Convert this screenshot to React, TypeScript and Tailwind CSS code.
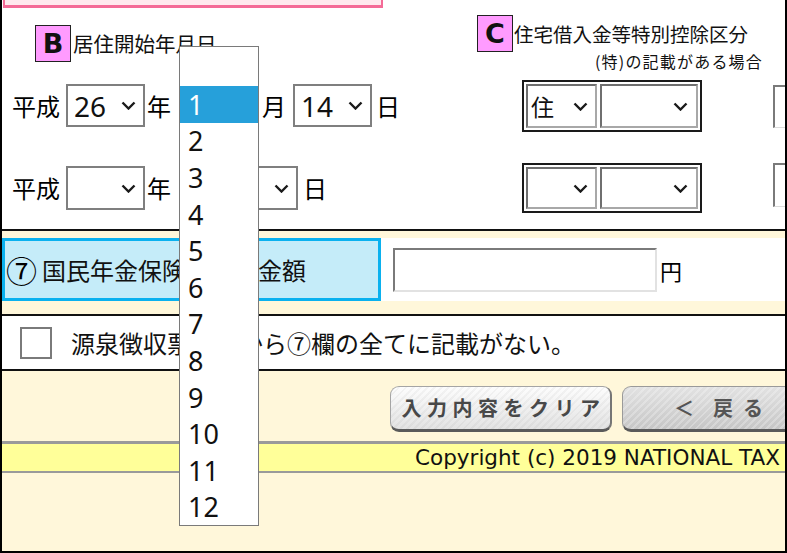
import React from "react";

const JP = "font-['Noto_Sans_CJK_JP',sans-serif]";
const LAT = "font-['DejaVu_Sans','Noto_Sans_CJK_JP',sans-serif]";
const NUM = "font-['Noto_Sans','Open_Sans',sans-serif]";

function Chev() {
  return (
    <svg width="15" height="9" viewBox="0 0 15 9" className="shrink-0">
      <path d="M1.5 1.5 L7.5 7.5 L13.5 1.5" fill="none" stroke="#1a1a1a" strokeWidth="2.4" />
    </svg>
  );
}

function Sel({ w, h, value, cls = "" }: { w: string; h: string; value?: string; cls?: string }) {
  return (
    <div className={`${w} ${h} ${cls} flex items-center justify-between bg-white border-2 border-[#7f7f7f] pl-[6px] pr-[7px] shrink-0`}>
      <span className={`${NUM} text-[28px] leading-none text-[#111]`}>{value ?? ""}</span>
      <Chev />
    </div>
  );
}

function GroupSel({ first, h }: { first?: string; h: string }) {
  return (
    <div className={`w-[180px] ${h} border-2 border-[#1a1a1a] p-[2px] flex gap-[3px] bg-white shrink-0`}>
      <div className="w-[71px] h-full flex items-center justify-between border-2 border-t-[#6f6f6f] border-l-[#6f6f6f] border-r-[#a8a8a8] border-b-[#a8a8a8] pl-[3px] pr-[7px]">
        <span className={`${JP} text-[23px] leading-none text-[#111]`}>{first ?? ""}</span>
        <Chev />
      </div>
      <div className="flex-1 h-full flex items-center justify-end border-2 border-t-[#6f6f6f] border-l-[#6f6f6f] border-r-[#a8a8a8] border-b-[#a8a8a8] pr-[8px]">
        <Chev />
      </div>
    </div>
  );
}

function Label({ letter }: { letter: string }) {
  return (
    <div className="w-[36px] h-[37px] shrink-0 bg-[#ff9bff] border-[1.5px] border-[#222] flex items-center justify-center">
      <span className={`${LAT} font-bold text-[27px] leading-none text-[#111]`}>{letter}</span>
    </div>
  );
}

export default function App() {
  const months = ["1", "2", "3", "4", "5", "6", "7", "8", "9", "10", "11", "12"];
  return (
    <div className={`relative w-[787px] h-[553px] overflow-hidden bg-[#fff7da] border-l-2 border-r-2 border-b-2 border-black text-black ${JP}`}>
      {/* upper white section */}
      <div className="h-[231px] bg-white border-b-2 border-[#111]">
        <div className="ml-[1px] w-[380px] h-[8px] border-x-2 border-b-[3px] border-[#f46b97] bg-[#ffe9ee]" />
        <div className="flex">
          {/* left column */}
          <div className="w-[475px] shrink-0">
            <div className="mt-[17px] ml-[33px] flex items-center h-[37px]">
              <Label letter="B" />
              <span className="ml-[2px] text-[20.5px] leading-none text-[#111]">居住開始年月日</span>
            </div>
            <div className="mt-[22px] ml-[10px] h-[43px] flex items-center text-[24px] leading-none">
              <span>平成</span>
              <Sel w="w-[79px]" h="h-[43px]" value="26" cls="ml-[6px]" />
              <span className="ml-[2px]">年</span>
              <Sel w="w-[79px]" h="h-[43px]" value="1" cls="ml-[8px]" />
              <span className="ml-[4px]">月</span>
              <Sel w="w-[79px]" h="h-[43px]" value="14" cls="ml-[7px]" />
              <span className="ml-[4px]">日</span>
            </div>
            <div className="mt-[39px] ml-[10px] h-[44px] flex items-center text-[24px] leading-none">
              <span>平成</span>
              <Sel w="w-[79px]" h="h-[44px]" cls="ml-[6px]" />
              <span className="ml-[2px]">年</span>
              <Sel w="w-[119px]" h="h-[44px]" cls="ml-[8px]" />
              <span className="ml-[5px]">日</span>
            </div>
          </div>
          {/* right column */}
          <div className="w-[308px] shrink-0 min-w-0">
            <div className="mt-[7px] flex items-center h-[37px]">
              <Label letter="C" />
              <span className="ml-[1px] text-[19.5px] leading-none text-[#111] whitespace-nowrap">住宅借入金等特別控除区分</span>
            </div>
            <div className="h-[18px] flex items-center justify-end pr-[22px]">
              <span className="text-[16px] leading-none tracking-[1.2px] text-[#111] whitespace-nowrap">(特)の記載がある場合</span>
            </div>
            <div className="mt-[10px] flex items-start">
              <div className="ml-[45px]">
                <GroupSel first="住" h="h-[52px]" />
              </div>
              <div className="ml-[71px] mt-[5px] w-[40px] h-[43px] shrink-0 bg-white border-t-2 border-l-2 border-[#7a7a7a] border-r border-b border-r-[#dcdcdc] border-b-[#dcdcdc]" />
            </div>
            <div className="mt-[31px] flex items-start">
              <div className="ml-[45px]">
                <GroupSel h="h-[50px]" />
              </div>
              <div className="ml-[71px] w-[40px] h-[44px] shrink-0 bg-white border-t-2 border-l-2 border-[#7a7a7a] border-r border-b border-r-[#dcdcdc] border-b-[#dcdcdc]" />
            </div>
          </div>
        </div>
      </div>

      {/* row 7 */}
      <div className="mt-[7px] h-[63px] flex bg-white">
        <div className="w-[379px] shrink-0 h-full bg-[#c5ecf9] border-[3px] border-[#0ab1ef] flex items-center pl-[1px]">
          <span className="text-[31px] leading-none">⑦</span>
          <span className="ml-[5px] text-[24px] leading-none text-[#111] whitespace-nowrap">国民年金保険料等の金額</span>
        </div>
        <div className="flex items-center pl-[12px]">
          <div className="w-[264px] h-[44px] bg-white border-t-2 border-l-2 border-[#7a7a7a] border-r-2 border-b-2 border-r-[#e2e2e2] border-b-[#e2e2e2]" />
          <span className="ml-[3px] text-[22px] leading-none">円</span>
        </div>
      </div>

      {/* checkbox row */}
      <div className="mt-[13px] h-[57px] bg-white border-y-2 border-[#111] flex items-center">
        <div className="ml-[18px] w-[32px] h-[32px] border-2 border-[#7a7a7a] bg-white shrink-0" />
        <span className="ml-[19px] text-[24px] leading-none text-[#111] whitespace-nowrap">源泉徴収票の①から⑦欄の全てに記載がない。</span>
      </div>

      {/* buttons */}
      <div className="mt-[15px] h-[46px] flex pl-[388px]">
        <div className="w-[222px] h-[46px] shrink-0 rounded-[9px] border-[1.5px] border-[#a5a5a5] border-b-[3px] border-b-[#5a5a5a] border-r-2 border-r-[#767676] bg-[repeating-linear-gradient(135deg,rgba(0,0,0,0.035)_0px,rgba(0,0,0,0.035)_2px,transparent_2px,transparent_5px),linear-gradient(#fdfdfd,#e3e3e3)] flex items-center justify-center pl-[6px]">
          <span className="text-[20px] font-bold leading-none tracking-[5.5px] text-[#484848] whitespace-nowrap">入力内容をクリア</span>
        </div>
        <div className="ml-[10px] w-[200px] h-[46px] shrink-0 rounded-[9px] border-[1.5px] border-[#9a9a9a] border-b-[3px] border-b-[#5a5a5a] bg-[repeating-linear-gradient(135deg,rgba(255,255,255,0.25)_0px,rgba(255,255,255,0.25)_2px,transparent_2px,transparent_5px),linear-gradient(#e2e2e2,#c6c6c6)] flex items-center pl-[51px]">
          <span className="text-[20px] font-bold leading-none text-[#555]">＜</span>
          <span className="ml-[19px] text-[20px] font-bold leading-none tracking-[10px] text-[#555] whitespace-nowrap">戻る</span>
        </div>
      </div>

      {/* footer */}
      <div className="mt-[9px] h-[32px] bg-[#ffff99] border-t-[3px] border-b-2 border-[#9a9a9a] flex items-center pl-[413px]">
        <span className={`${LAT} text-[21.5px] leading-none text-[#111] whitespace-nowrap`}>Copyright (c) 2019 NATIONAL TAX</span>
      </div>

      {/* open dropdown list */}
      <div className="absolute left-[177px] top-[46px] w-[80px] bg-white border border-[#7a7a7a]">
        <div className="h-[39px]" />
        {months.map((m) => (
          <div
            key={m}
            className={`h-[36.6px] flex items-center pl-[8px] ${NUM} text-[27px] leading-none ${m === "1" ? "bg-[#26a0da] text-white" : "text-[#111]"}`}
          >
            {m}
          </div>
        ))}
      </div>
    </div>
  );
}
